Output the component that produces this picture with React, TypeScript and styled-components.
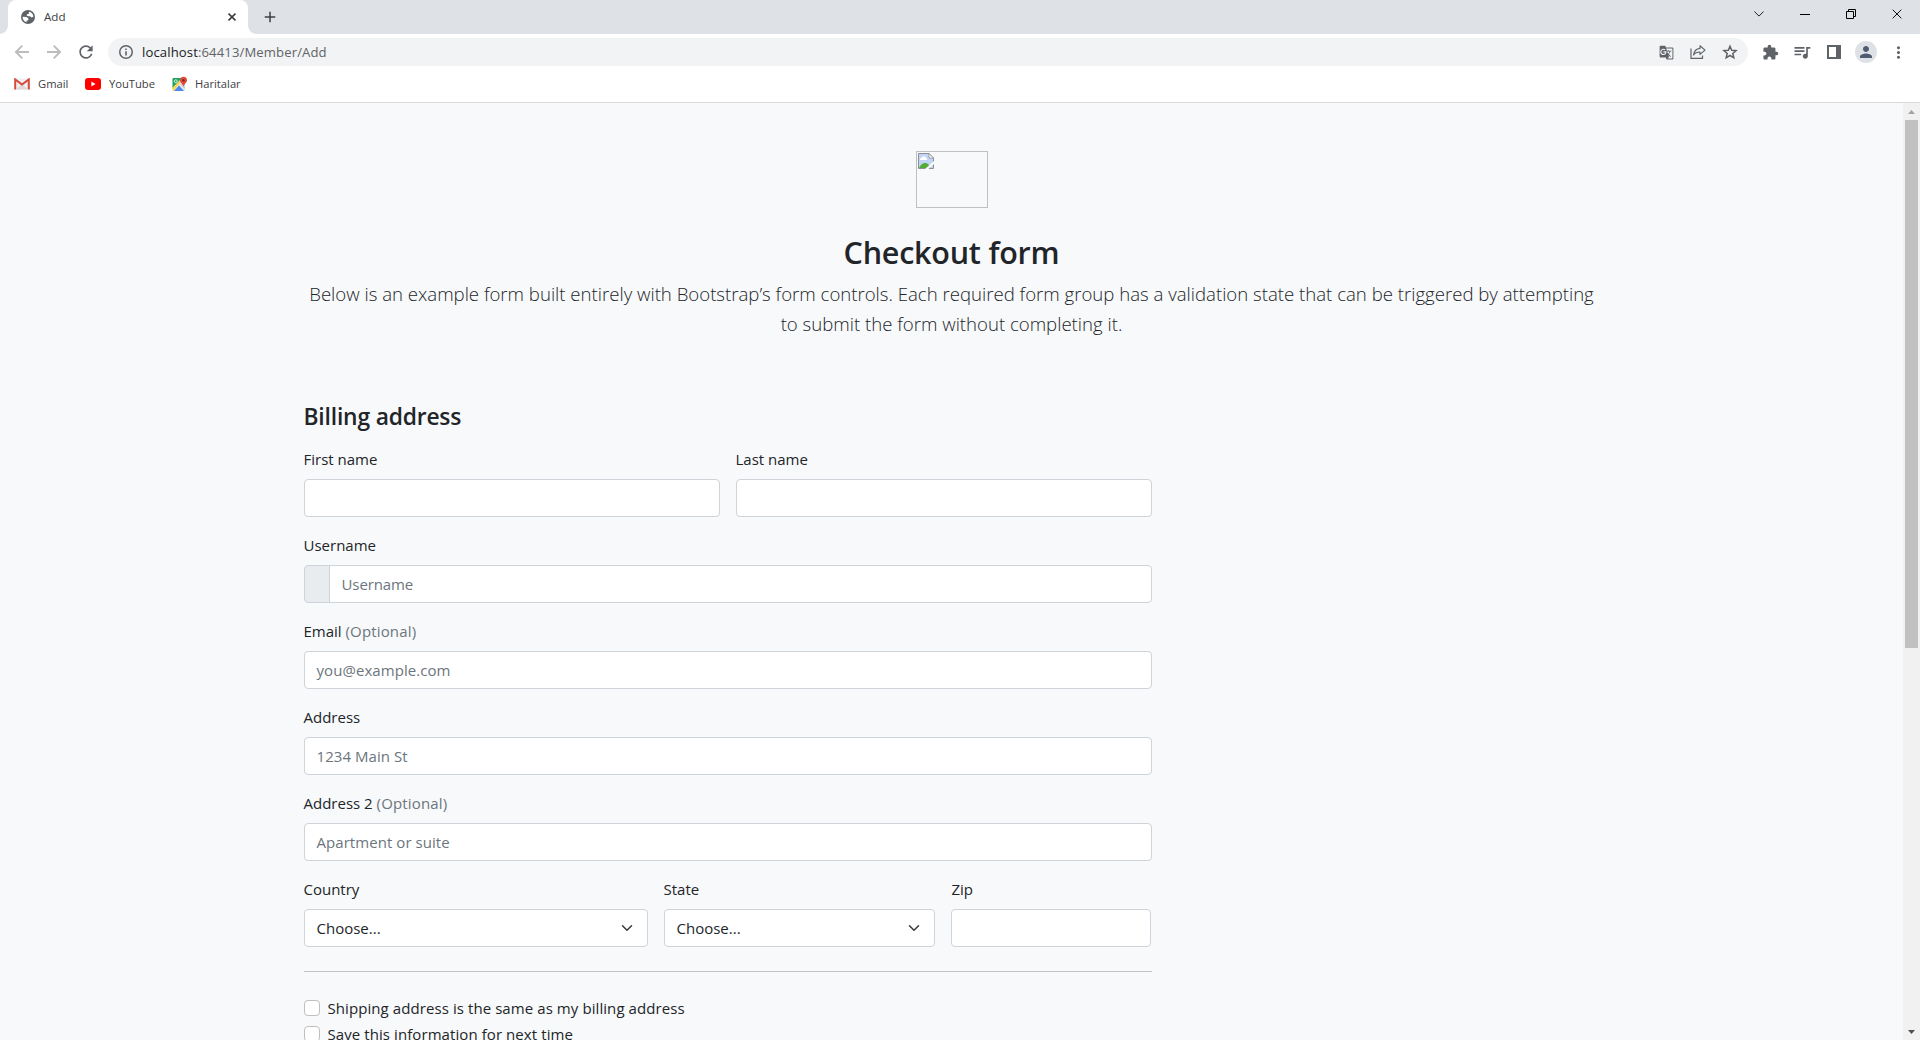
import React from "react";
import styled, { createGlobalStyle } from "styled-components";
import { MdAdd, MdExtension, MdGTranslate, MdMoreVert, MdPerson, MdQueueMusic, MdRefresh } from "react-icons/md";

const GlobalStyle = createGlobalStyle`
  *, *::before, *::after { box-sizing: border-box; }
  html, body { margin: 0; padding: 0; overflow: hidden; }
  body {
    font-family: "Open Sans", "Noto Sans", sans-serif;
    color: #212529;
    background: #f8f9fa;
  }
  svg { display: block; flex: none; }
`;

const Window = styled.div`
  display: flex;
  flex-direction: column;
  width: 1920px;
  height: 1040px;
  overflow: hidden;
`;

const TabStrip = styled.div`
  display: flex;
  height: 34px;
  background: #dee1e6;
  padding-left: 8px;
`;

const Tab = styled.div`
  position: relative;
  display: flex;
  align-items: center;
  width: 240px;
  height: 34px;
  padding: 0 10px 0 13px;
  background: #fff;
  border-radius: 8px 8px 0 0;
  color: #5f6368;

  &::before,
  &::after {
    content: "";
    position: absolute;
    bottom: 0;
    width: 8px;
    height: 8px;
  }
  &::before {
    left: -8px;
    background: radial-gradient(circle at 0 0, #dee1e6 7.5px, #fff 8px);
  }
  &::after {
    right: -8px;
    background: radial-gradient(circle at 100% 0, #dee1e6 7.5px, #fff 8px);
  }
`;

const TabTitle = styled.span`
  flex: 1;
  margin-left: 9px;
  font-size: 11.6px;
  line-height: 16px;
  color: #3c4043;
`;

const TabClose = styled.div`
  display: flex;
  justify-content: center;
  width: 12px;
`;

const NewTab = styled.div`
  display: flex;
  align-items: center;
  justify-content: center;
  width: 28px;
  margin-left: 7.5px;
  color: #3c4043;
`;

const WindowButtons = styled.div`
  display: flex;
  margin-left: auto;
`;

const WindowButton = styled.div`
  display: flex;
  align-items: center;
  justify-content: center;
  width: 46px;
  height: 28px;
`;

const Toolbar = styled.div`
  display: flex;
  align-items: center;
  height: 36px;
  padding: 0 6px;
  background: #fff;
`;

const IconCell = styled.div<{ $color?: string }>`
  display: flex;
  align-items: center;
  justify-content: center;
  width: 32px;
  height: 28px;
  color: ${(p) => p.$color ?? "#5f6368"};
`;

const AddressBar = styled.div`
  display: flex;
  align-items: center;
  flex: 1;
  height: 28px;
  margin: 0 6px;
  padding: 0 2px;
  border-radius: 14px;
  background: #f1f3f4;
`;

const Url = styled.div`
  flex: 1;
  font-size: 13.1px;
  line-height: 20px;
  letter-spacing: 0.12px;
  color: #5f6368;
  span {
    color: #202124;
  }
`;

const Avatar = styled.div`
  display: flex;
  align-items: center;
  justify-content: center;
  width: 22px;
  height: 22px;
  border-radius: 50%;
  background: #dee1e6;
  color: #4f5b70;
`;

const Bookmarks = styled.div`
  display: flex;
  align-items: center;
  height: 33px;
  padding: 0 0 5px 14px;
  background: #fff;
  border-bottom: 1px solid #d8dade;
`;

const Bookmark = styled.div<{ $gap: number; $width: number }>`
  display: flex;
  align-items: center;
  gap: ${(p) => p.$gap}px;
  width: ${(p) => p.$width}px;
  font-size: 11.2px;
  line-height: 16px;
  color: #3c4043;
  white-space: nowrap;
`;

const Viewport = styled.div`
  display: flex;
  flex: 1;
  min-height: 0;
`;

const Page = styled.div`
  flex: 1;
  overflow: hidden;
  background: #f8f9fa;
`;

const Scrollbar = styled.div`
  display: flex;
  flex-direction: column;
  align-items: center;
  width: 17px;
  background: #f1f1f1;
`;

const ScrollArrow = styled.div`
  display: flex;
  align-items: center;
  justify-content: center;
  width: 17px;
  height: 17px;
`;

const ScrollThumb = styled.div`
  width: 13px;
  height: 528px;
  margin-bottom: auto;
  background: #c1c1c1;
`;

const Container = styled.div`
  width: 1320px;
  margin: 0 auto;
  padding: 0 12px;
`;

const Intro = styled.header`
  display: flex;
  flex-direction: column;
  align-items: center;
  padding: 48px 0;
  text-align: center;
`;

const MissingImage = styled.div`
  width: 72px;
  height: 57px;
  margin-bottom: 25px;
  padding: 1px;
  border: 1px solid #c0c0c0;
`;

const Title = styled.h2`
  margin: 0 0 7.6px;
  font-size: 30.5px;
  font-weight: 600;
  line-height: 38.4px;
  letter-spacing: -0.23px;
`;

const Lead = styled.p`
  margin: 0 0 16.4px;
  font-size: 18.6px;
  font-weight: 300;
  line-height: 30px;
`;

const Form = styled.form`
  width: 848px;
`;

const SectionTitle = styled.h4`
  margin: 0 0 15px;
  font-size: 22.8px;
  font-weight: 600;
  line-height: 28.8px;
  letter-spacing: -0.17px;
`;

const Row = styled.div`
  display: flex;
  gap: 16px;
  margin-bottom: 16px;
`;

const Field = styled.div<{ $width?: number }>`
  width: ${(p) => (p.$width ? `${p.$width}px` : "100%")};
`;

const Label = styled.label`
  display: block;
  margin-bottom: 8px;
  font-size: 15px;
  line-height: 24px;
`;

const Muted = styled.span`
  color: #6c757d;
  letter-spacing: 0.15px;
`;

const Control = styled.div<{ $placeholder?: boolean }>`
  display: flex;
  align-items: center;
  justify-content: space-between;
  flex: 1;
  height: 38px;
  padding: 0 12px;
  border: 1px solid #ced4da;
  border-radius: 4px;
  background: #fff;
  font-size: 15px;
  line-height: 24px;
  letter-spacing: ${(p) => (p.$placeholder ? "0.06px" : "normal")};
  color: ${(p) => (p.$placeholder ? "#6c757d" : "#212529")};
`;

const InputGroup = styled.div`
  display: flex;
  ${Control} {
    margin-left: -1px;
    border-radius: 0 4px 4px 0;
    letter-spacing: -0.1px;
  }
`;

const Addon = styled.div`
  width: 26px;
  height: 38px;
  border: 1px solid #ced4da;
  border-radius: 4px 0 0 4px;
  background: #e9ecef;
`;

const Divider = styled.hr`
  height: 1px;
  margin: 24px 0;
  border: 0;
  background: #212529;
  opacity: 0.25;
`;

const Check = styled.label`
  display: flex;
  gap: 8px;
  min-height: 24px;
  margin-bottom: 2px;
  font-size: 15px;
  line-height: 24px;
  letter-spacing: 0.08px;
`;

const Box = styled.span`
  width: 16px;
  height: 16px;
  margin-top: 4px;
  border: 1px solid #bfbfbf;
  border-radius: 4px;
  background: #fff;
`;

const CloseGlyph = ({ size = 8, width = 1.6, color = "#3c4043" }) => (
  <svg width={size} height={size} viewBox="0 0 10 10">
    <path d="M.7.7l8.6 8.6M9.3.7L.7 9.3" stroke={color} strokeWidth={(width * 10) / size} />
  </svg>
);

const GlobeIcon = () => (
  <svg width="14" height="14" viewBox="0 0 14 14">
    <circle cx="7" cy="7" r="7" fill="#5f6368" />
    <path
      d="M8 1.800c2.600.4 4.300 2.500 4.400 4.900L10.500 7.500 9 6.300H7L5.500 5.200 6.500 4h1.200zM1.600 6.800L5.500 7l2 1.600-.3 1.600-1.600.6-.2 1.400C3.200 11.600 1.500 9.500 1.600 6.800z"
      fill="#fff"
    />
  </svg>
);

const BackIcon = () => (
  <svg width="16" height="16" viewBox="0 0 16 16">
    <path d="M15 8H2M8.300 1.600L1.900 8l6.400 6.400" fill="none" stroke="currentColor" strokeWidth="1.900" />
  </svg>
);

const ForwardIcon = () => (
  <svg width="16" height="16" viewBox="0 0 16 16">
    <path d="M1 8h13M7.700 1.600L14.100 8l-6.400 6.400" fill="none" stroke="currentColor" strokeWidth="1.900" />
  </svg>
);

const InfoIcon = () => (
  <svg width="14" height="14" viewBox="0 0 14 14">
    <circle cx="7" cy="7" r="6.250" fill="none" stroke="currentColor" strokeWidth="1.500" />
    <path d="M6.200 6.200h1.600v4.300H6.200zM6.200 3.500h1.600v1.600H6.200z" fill="currentColor" />
  </svg>
);

const StarIcon = () => (
  <svg width="16" height="16" viewBox="0 0 16 16">
    <path
      d="M8 2.200l1.700 4 4.400.4-3.300 2.900 1 4.300L8 11.500l-3.800 2.300 1-4.300L1.900 6.600l4.400-.4z"
      fill="none"
      stroke="currentColor"
      strokeWidth="1.500"
    />
  </svg>
);

const ShareIcon = () => (
  <svg width="16" height="16" viewBox="0 0 16 16" fill="none" stroke="#5f6368" strokeWidth="1.2">
    <path d="M1 4.500V14.400H12.500V11.500" />
    <path d="M10 1.800L15 6.100L10 10.400V8C7 8 5 8.800 3.600 11C4 7.500 6 4.700 10 4.300Z" strokeLinejoin="round" />
  </svg>
);

const GmailIcon = () => (
  <svg width="16" height="12" viewBox="0 0 16 12">
    <path d="M1 .5h14v11H1z" fill="#f1efef" />
    <path d="M2 11.500L8 6l6 5.500z" fill="#dddada" />
    <path d="M1.200 11.600V1.400L8 6.600l6.800-5.200v10.200" fill="none" stroke="#d54b3d" strokeWidth="2" />
  </svg>
);

const YouTubeIcon = () => (
  <svg width="16" height="12" viewBox="0 0 16 12">
    <rect width="16" height="12" rx="3" fill="#f00" />
    <path d="M6.400 3.500L10.500 6L6.400 8.500z" fill="#fff" />
  </svg>
);

const MapsIcon = () => (
  <svg width="16" height="16" viewBox="0 0 16 16">
    <rect x=".5" y="2" width="12.500" height="13" rx="1" fill="#e8e8e8" />
    <path d="M1.500 2H10L.5 12V3a1 1 0 0 1 1-1z" fill="#1fa463" />
    <path d="M.5 12L10 2h2L2 14.500l-1.500 0z" fill="#fdd34a" />
    <path d="M2 15L7 9.500L12 15z" fill="#4889f4" />
    <path d="M8 8.500L13 13.500V7z" fill="#d2d2d2" />
    <circle cx="3.800" cy="5.200" r="1.400" fill="none" stroke="#fff" strokeWidth=".8" />
    <path d="M11.500 11C11.200 8 8 7.200 8 4.300a3.500 3.500 0 0 1 7 0C15 7.200 11.800 8 11.500 11z" fill="#dc4b3e" />
    <circle cx="11.500" cy="4.300" r="1.200" fill="#7f231c" />
  </svg>
);

const BrokenImageIcon = () => (
  <svg width="16" height="16" viewBox="0 0 16 16">
    <path d="M.5.5H11L15.500 5V15.500H.5z" fill="#c3d5f4" />
    <path d="M2 6.500a2 2 0 0 1 2-2 2.300 2.300 0 0 1 4.200.5A1.500 1.500 0 0 1 9 7H2z" fill="#fff" />
    <path d="M1 15c1.500-3.500 4-5 6-5s4 1 5.500 5z" fill="#54ab38" />
    <path d="M.5 15.500V.5H11L15.500 5V15.500z" fill="none" stroke="#8c8f93" />
    <path d="M11 .5V5h4.500z" fill="#fff" stroke="#8c8f93" strokeWidth=".8" />
    <path d="M16 8V11L10.500 16H7z" fill="#f8f9fa" />
  </svg>
);

const SelectArrow = () => (
  <svg width="16" height="12" viewBox="0 0 16 16">
    <path d="M2 5l6 6 6-6" fill="none" stroke="#343a40" strokeWidth="2" strokeLinecap="round" strokeLinejoin="round" />
  </svg>
);

const textFields = [
  { label: "Email", optional: true, placeholder: "you@example.com" },
  { label: "Address", optional: false, placeholder: "1234 Main St" },
  { label: "Address 2", optional: true, placeholder: "Apartment or suite" },
];

const selects = [
  { label: "Country", width: 344 },
  { label: "State", width: 271.9 },
];

const Browser = () => (
  <>
    <TabStrip>
      <Tab>
        <GlobeIcon />
        <TabTitle>Add</TabTitle>
        <TabClose>
          <CloseGlyph />
        </TabClose>
      </Tab>
      <NewTab>
        <MdAdd size={18} />
      </NewTab>
      <WindowButtons>
        <WindowButton>
          <svg width="10" height="6" viewBox="0 0 10 6">
            <path d="M.4.5L5 5.100L9.600.5" fill="none" stroke="#222" />
          </svg>
        </WindowButton>
        <WindowButton>
          <svg width="10" height="1">
            <rect width="10" height="1" fill="#000" />
          </svg>
        </WindowButton>
        <WindowButton>
          <svg width="10" height="10" viewBox="0 0 10 10" fill="none" stroke="#000">
            <path d="M.5 2.500h7v7h-7zM2.500 2.500v-2h7v7h-2" />
          </svg>
        </WindowButton>
        <WindowButton>
          <CloseGlyph size={10} width={1} color="#111" />
        </WindowButton>
      </WindowButtons>
    </TabStrip>
    <Toolbar>
      <IconCell $color="#babcbe">
        <BackIcon />
      </IconCell>
      <IconCell $color="#babcbe">
        <ForwardIcon />
      </IconCell>
      <IconCell>
        <MdRefresh size={20} />
      </IconCell>
      <AddressBar>
        <IconCell>
          <InfoIcon />
        </IconCell>
        <Url>
          <span>localhost</span>:64413/Member/Add
        </Url>
        <IconCell>
          <MdGTranslate size={15} />
        </IconCell>
        <IconCell>
          <ShareIcon />
        </IconCell>
        <IconCell>
          <StarIcon />
        </IconCell>
      </AddressBar>
      <IconCell>
        <MdExtension size={17} />
      </IconCell>
      <IconCell>
        <MdQueueMusic size={20} />
      </IconCell>
      <IconCell>
        <svg width="14" height="14">
          <path d="M0 0h14v14H0zM2 2v10h7V2z" fill="#5f6368" fillRule="evenodd" />
        </svg>
      </IconCell>
      <IconCell>
        <Avatar>
          <MdPerson size={18} />
        </Avatar>
      </IconCell>
      <IconCell>
        <MdMoreVert size={19} />
      </IconCell>
    </Toolbar>
    <Bookmarks>
      <Bookmark $gap={8} $width={71}>
        <GmailIcon />
        Gmail
      </Bookmark>
      <Bookmark $gap={8} $width={87}>
        <YouTubeIcon />
        YouTube
      </Bookmark>
      <Bookmark $gap={7} $width={90}>
        <MapsIcon />
        Haritalar
      </Bookmark>
    </Bookmarks>
  </>
);

export default function App() {
  return (
    <Window>
      <GlobalStyle />
      <Browser />
      <Viewport>
        <Page>
          <Container>
            <Intro>
              <MissingImage>
                <BrokenImageIcon />
              </MissingImage>
              <Title>Checkout form</Title>
              <Lead>
                Below is an example form built entirely with Bootstrap’s form controls. Each required form group has a
                validation state that can be triggered by attempting
                <br />
                to submit the form without completing it.
              </Lead>
            </Intro>
            <Form>
              <SectionTitle>Billing address</SectionTitle>
              <Row>
                <Field>
                  <Label>First name</Label>
                  <Control />
                </Field>
                <Field>
                  <Label>Last name</Label>
                  <Control />
                </Field>
              </Row>
              <Row>
                <Field>
                  <Label>Username</Label>
                  <InputGroup>
                    <Addon />
                    <Control $placeholder>Username</Control>
                  </InputGroup>
                </Field>
              </Row>
              {textFields.map((f) => (
                <Row key={f.label}>
                  <Field>
                    <Label>
                      {f.label} {f.optional && <Muted>(Optional)</Muted>}
                    </Label>
                    <Control $placeholder>{f.placeholder}</Control>
                  </Field>
                </Row>
              ))}
              <Row>
                {selects.map((s) => (
                  <Field key={s.label} $width={s.width}>
                    <Label>{s.label}</Label>
                    <Control>
                      Choose...
                      <SelectArrow />
                    </Control>
                  </Field>
                ))}
                <Field $width={199.98}>
                  <Label>Zip</Label>
                  <Control />
                </Field>
              </Row>
              <Divider />
              <Check>
                <Box />
                Shipping address is the same as my billing address
              </Check>
              <Check>
                <Box />
                Save this information for next time
              </Check>
            </Form>
          </Container>
        </Page>
        <Scrollbar>
          <ScrollArrow>
            <svg width="7" height="4">
              <path d="M3.500 0L7 4H0z" fill="#a3a3a3" />
            </svg>
          </ScrollArrow>
          <ScrollThumb />
          <ScrollArrow>
            <svg width="7" height="4">
              <path d="M3.500 4L7 0H0z" fill="#505050" />
            </svg>
          </ScrollArrow>
        </Scrollbar>
      </Viewport>
    </Window>
  );
}
